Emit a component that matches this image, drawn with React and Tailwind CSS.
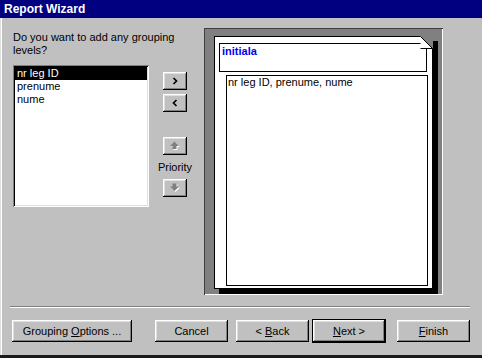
import React from 'react';

const raised =
  'bg-[#c0c0c0] shadow-[inset_-1px_-1px_#000,inset_1px_1px_#fff,inset_-2px_-2px_#808080,inset_2px_2px_#dfdfdf]';

function SmallButton({ children }) {
  return (
    <div className={`w-[24px] h-[18px] flex items-center justify-center ${raised}`}>
      {children}
    </div>
  );
}

function Chevron({ dir }) {
  const d = dir === 'right' ? 'M1.5 1 L4.5 4 L1.5 7' : 'M4.5 1 L1.5 4 L4.5 7';
  return (
    <svg width="6" height="8" viewBox="0 0 6 8">
      <path d={d} fill="none" stroke="#000" strokeWidth="1.7" />
    </svg>
  );
}

function GrayArrow({ dir }) {
  // disabled arrow: gray shape with a white copy beneath
  const up = 'M4.5 0.5 L9 5 L6.5 5 L6.5 8 L2.5 8 L2.5 5 L0 5 Z';
  const down = 'M4.5 8 L9 3.5 L6.5 3.5 L6.5 0.5 L2.5 0.5 L2.5 3.5 L0 3.5 Z';
  const d = dir === 'up' ? up : down;
  return (
    <svg width="11" height="10" viewBox="0 0 11 10">
      <path d={d} transform="translate(1 1)" fill="#fff" />
      <path d={d} fill="#808080" />
    </svg>
  );
}

function DialogButton({ width, children, isDefault }) {
  return (
    <div
      className={`h-[22px] flex items-center justify-center ${raised} ${
        isDefault ? 'outline outline-1 outline-black' : ''
      }`}
      style={{ width }}
    >
      {children}
    </div>
  );
}

export default function App() {
  return (
    <div className="w-[482px] h-[358px] bg-[#c0c0c0] font-['Liberation_Sans',Arial,sans-serif] text-[11px] text-black overflow-hidden flex flex-col">
      {/* title bar */}
      <div className="h-[18px] shrink-0 bg-[#000080] text-white font-bold text-[12px] leading-[18px] pl-[4px]">
        Report Wizard
      </div>

      <div className="flex-1 flex flex-col border-b-[3px] border-[#1a1a1a] shadow-[inset_1px_0_#dfdfdf,inset_2px_0_#fff]">
        {/* main area */}
        <div className="flex pt-[10px] pl-[13px]">
          {/* field list */}
          <div className="w-[136px] flex flex-col">
            <p className="mt-[3px] leading-[13px] w-[175px]">
              Do you want to add any grouping
              <br />
              levels?
            </p>
            <div className="mt-[8px] w-[136px] h-[142px] bg-white p-[2px] shadow-[inset_1px_1px_#808080,inset_-1px_-1px_#fff,inset_2px_2px_#000,inset_-2px_-2px_#dfdfdf]">
              <div className="bg-black text-white leading-[13px] pl-[2px]">nr leg ID</div>
              <div className="leading-[13px] pl-[2px]">prenume</div>
              <div className="leading-[13px] pl-[2px]">nume</div>
            </div>
          </div>

          {/* move / priority buttons */}
          <div className="ml-[14px] w-[24px] flex flex-col items-center pt-[44px]">
            <SmallButton>
              <Chevron dir="right" />
            </SmallButton>
            <div className="mt-[4px]">
              <SmallButton>
                <Chevron dir="left" />
              </SmallButton>
            </div>
            <div className="mt-[25px]">
              <SmallButton>
                <GrayArrow dir="up" />
              </SmallButton>
            </div>
            <div className="h-[24px] flex items-center justify-center whitespace-nowrap">Priority</div>
            <SmallButton>
              <GrayArrow dir="down" />
            </SmallButton>
          </div>

          {/* preview */}
          <div className="ml-[17px] w-[239px] h-[267px] bg-[#808080] pt-[8px] pl-[10px] shadow-[inset_1px_1px_#404040,inset_-1px_-1px_#fff]">
            <div className="relative w-[219px] h-[253px] bg-white border border-black shadow-[5px_5px_0_#000] pt-[6px] pl-[4px]">
              <div className="w-[208px] h-[29px] border border-black pl-[2px] pt-[1px] leading-[13px] font-bold text-[#0000f0]">
                initiala
              </div>
              <div className="mt-[3px] ml-[7px] w-[202px] h-[211px] border border-black pl-[1px] leading-[13px]">
                nr leg ID, prenume, nume
              </div>
              <svg
                className="absolute top-[-1px] right-[-1px] z-10"
                width="13"
                height="13"
                viewBox="0 0 13 13"
              >
                <polygon points="0,0 13,0 13,13" fill="#808080" />
                <polygon points="0.5,0.5 0.5,12.5 12.5,12.5" fill="#fff" />
                <path d="M0.5 0.5 L12.5 12.5 L0.5 12.5" fill="none" stroke="#000" strokeWidth="1" />
              </svg>
            </div>
          </div>
        </div>

        {/* separator */}
        <div className="mt-[11px] ml-[10px] w-[460px] h-[2px] border-t border-[#808080] border-b border-b-white" />

        {/* buttons */}
        <div className="flex mt-[12px] pl-[12px]">
          <DialogButton width={120}>
            <span>
              Grouping <u className="underline-offset-[1px]">O</u>ptions ...
            </span>
          </DialogButton>
          <div className="ml-[23px]">
            <DialogButton width={73}>Cancel</DialogButton>
          </div>
          <div className="ml-[8px]">
            <DialogButton width={73}>
              <span>
                &lt; <u className="underline-offset-[1px]">B</u>ack
              </span>
            </DialogButton>
          </div>
          <div className="ml-[4px]">
            <DialogButton width={72} isDefault>
              <span>
                <u className="underline-offset-[1px]">N</u>ext &gt;
              </span>
            </DialogButton>
          </div>
          <div className="ml-[12px]">
            <DialogButton width={73}>
              <span>
                <u className="underline-offset-[1px]">F</u>inish
              </span>
            </DialogButton>
          </div>
        </div>
      </div>
    </div>
  );
}
